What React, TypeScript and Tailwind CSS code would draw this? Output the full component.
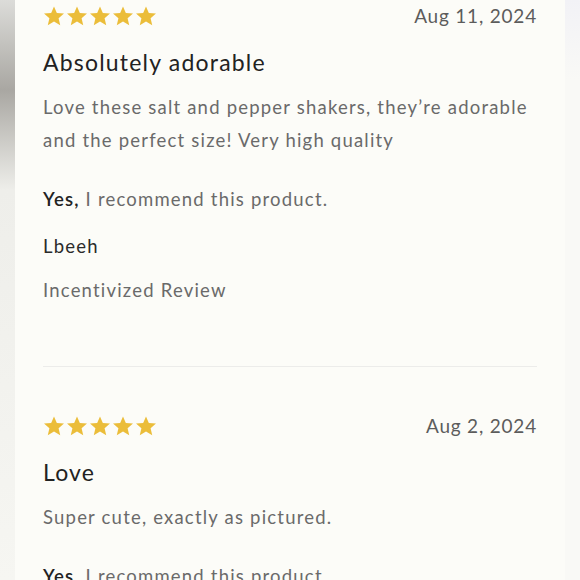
const reviews = [
  {
    date: "Aug 11, 2024",
    title: "Absolutely adorable",
    body: "Love these salt and pepper shakers, they’re adorable and the perfect size! Very high quality",
    author: "Lbeeh",
  },
  {
    date: "Aug 2, 2024",
    title: "Love",
    body: "Super cute, exactly as pictured.",
    author: "",
  },
]

function Stars() {
  return (
    <div className="flex gap-[1px]">
      {[0, 1, 2, 3, 4].map((i) => (
        <svg key={i} width="22" height="22" viewBox="0 0 24 24">
          <path
            d="M12 1.5l3.1 7.2 7.8.7-5.9 5.1 1.8 7.7L12 18.1l-6.8 4.1 1.8-7.7-5.9-5.1 7.8-.7z"
            fill="#ebbd3a"
          />
        </svg>
      ))}
    </div>
  )
}

export default function App() {
  return (
    <div
      className="flex h-[580px] w-[580px] overflow-hidden bg-[#f8f8f5]"
      style={{ fontFamily: "Lato, 'Open Sans', sans-serif" }}
    >
      {/* left blurred edge */}
      <div className="w-[15px] shrink-0 bg-[linear-gradient(to_bottom,#dcdcd9_0px,#a9a7a2_90px,#eeeeea_190px,#f6f6f2_100%)]" />

      <div className="w-[550px] shrink-0 bg-[#fcfcf8] px-[28px] pt-[5px]">
        {reviews.map((r, idx) => (
          <div key={idx}>
            {idx > 0 && <div className="mt-[61px] mb-[48px] border-t border-[#ececea]" />}

            <div className="flex h-[22px] items-center justify-between">
              <Stars />
              <span className="text-[19px] tracking-[0.8px] text-[#5c5c5c]">{r.date}</span>
            </div>

            <h3 className="mt-[20px] text-[23px] leading-[30px] tracking-[1.2px] text-[#222]">{r.title}</h3>

            <p className="mt-[14px] text-[18.5px] leading-[33px] tracking-[1.2px] text-[#6a6a6a]">
              {r.body}
            </p>

            <p className="mt-[27px] text-[18.5px] leading-[30px] tracking-[1.2px] text-[#6a6a6a]">
              <span className="font-semibold text-[#222]">Yes,</span> I recommend this product.
            </p>

            {r.author && (
              <>
                <p className="mt-[17px] text-[18.5px] leading-[30px] tracking-[1.2px] text-[#2a2a2a]">
                  {r.author}
                </p>
                <p className="mt-[14px] text-[18.5px] leading-[30px] tracking-[1.2px] text-[#6a6a6a]">
                  Incentivized Review
                </p>
              </>
            )}
          </div>
        ))}
      </div>

      {/* right edge */}
      <div className="flex-1 bg-[linear-gradient(to_bottom,#f2f2f6_0px,#f9f9f6_80px,#f9f9f6_100%)]" />
    </div>
  )
}
